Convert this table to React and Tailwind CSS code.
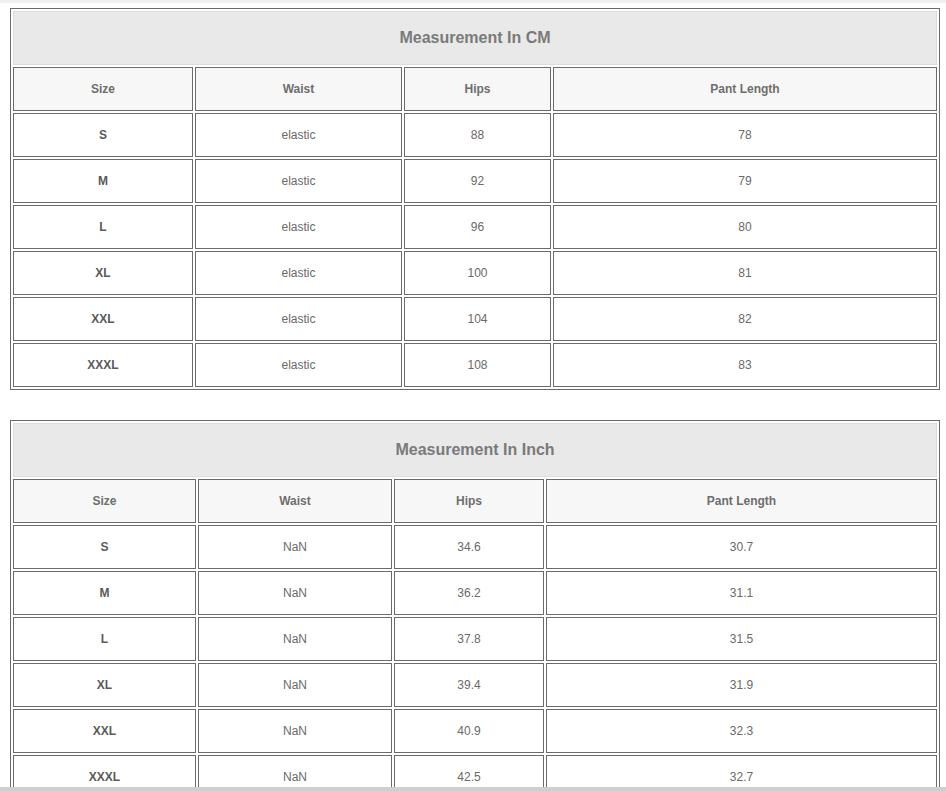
import React from "react";

const cm = {
  title: "Measurement In CM",
  widths: ["w-[180px]", "w-[207px]", "w-[147px]", ""],
  rows: [
    ["S", "elastic", "88", "78"],
    ["M", "elastic", "92", "79"],
    ["L", "elastic", "96", "80"],
    ["XL", "elastic", "100", "81"],
    ["XXL", "elastic", "104", "82"],
    ["XXXL", "elastic", "108", "83"],
  ],
};

const inch = {
  title: "Measurement In Inch",
  widths: ["w-[183px]", "w-[194px]", "w-[150px]", ""],
  rows: [
    ["S", "NaN", "34.6", "30.7"],
    ["M", "NaN", "36.2", "31.1"],
    ["L", "NaN", "37.8", "31.5"],
    ["XL", "NaN", "39.4", "31.9"],
    ["XXL", "NaN", "40.9", "32.3"],
    ["XXXL", "NaN", "42.5", "32.7"],
  ],
};

const headers = ["Size", "Waist", "Hips", "Pant Length"];

function SizeTable({ data, className }) {
  return (
    <table
      className={
        "w-[930px] table-fixed border-separate border-spacing-[2px] border border-[#6b6b6b] text-center " +
        className
      }
    >
      <colgroup>
        {data.widths.map((w, i) => (
          <col key={i} className={w} />
        ))}
      </colgroup>
      <tbody>
        <tr>
          <td
            colSpan={4}
            className="h-[54px] border border-[#dcdcdc] bg-[#e9e9e9] p-0 text-[16px] font-bold text-[#7a7a7a] align-middle"
          >
            {data.title}
          </td>
        </tr>
        <tr>
          {headers.map((h) => (
            <td
              key={h}
              className="h-[44px] border border-[#6b6b6b] bg-[#f7f7f7] p-0 text-[12px] font-bold text-[#6e6e6e] align-middle"
            >
              {h}
            </td>
          ))}
        </tr>
        {data.rows.map((r) => (
          <tr key={r[0]}>
            {r.map((c, i) => (
              <td
                key={i}
                className={
                  "h-[44px] border border-[#6b6b6b] bg-white p-0 text-[12px] align-middle " +
                  (i === 0 ? "font-bold text-[#5a5a5a]" : "font-normal text-[#6a6a6a]")
                }
              >
                {c}
              </td>
            ))}
          </tr>
        ))}
      </tbody>
    </table>
  );
}

export default function App() {
  return (
    <div
      className="flex h-[791px] w-[946px] flex-col overflow-hidden bg-white"
      style={{ fontFamily: '"Liberation Sans", Arial, sans-serif' }}
    >
      <div className="h-[3px] shrink-0 bg-[#eeeeee]" />
      <div className="min-h-0 flex-1 overflow-hidden pl-[10px] pt-[5px]">
        <SizeTable data={cm} className="" />
        <SizeTable data={inch} className="mt-[30px]" />
      </div>
      <div className="h-[4px] shrink-0 bg-[#cfcfcf]" />
    </div>
  );
}
